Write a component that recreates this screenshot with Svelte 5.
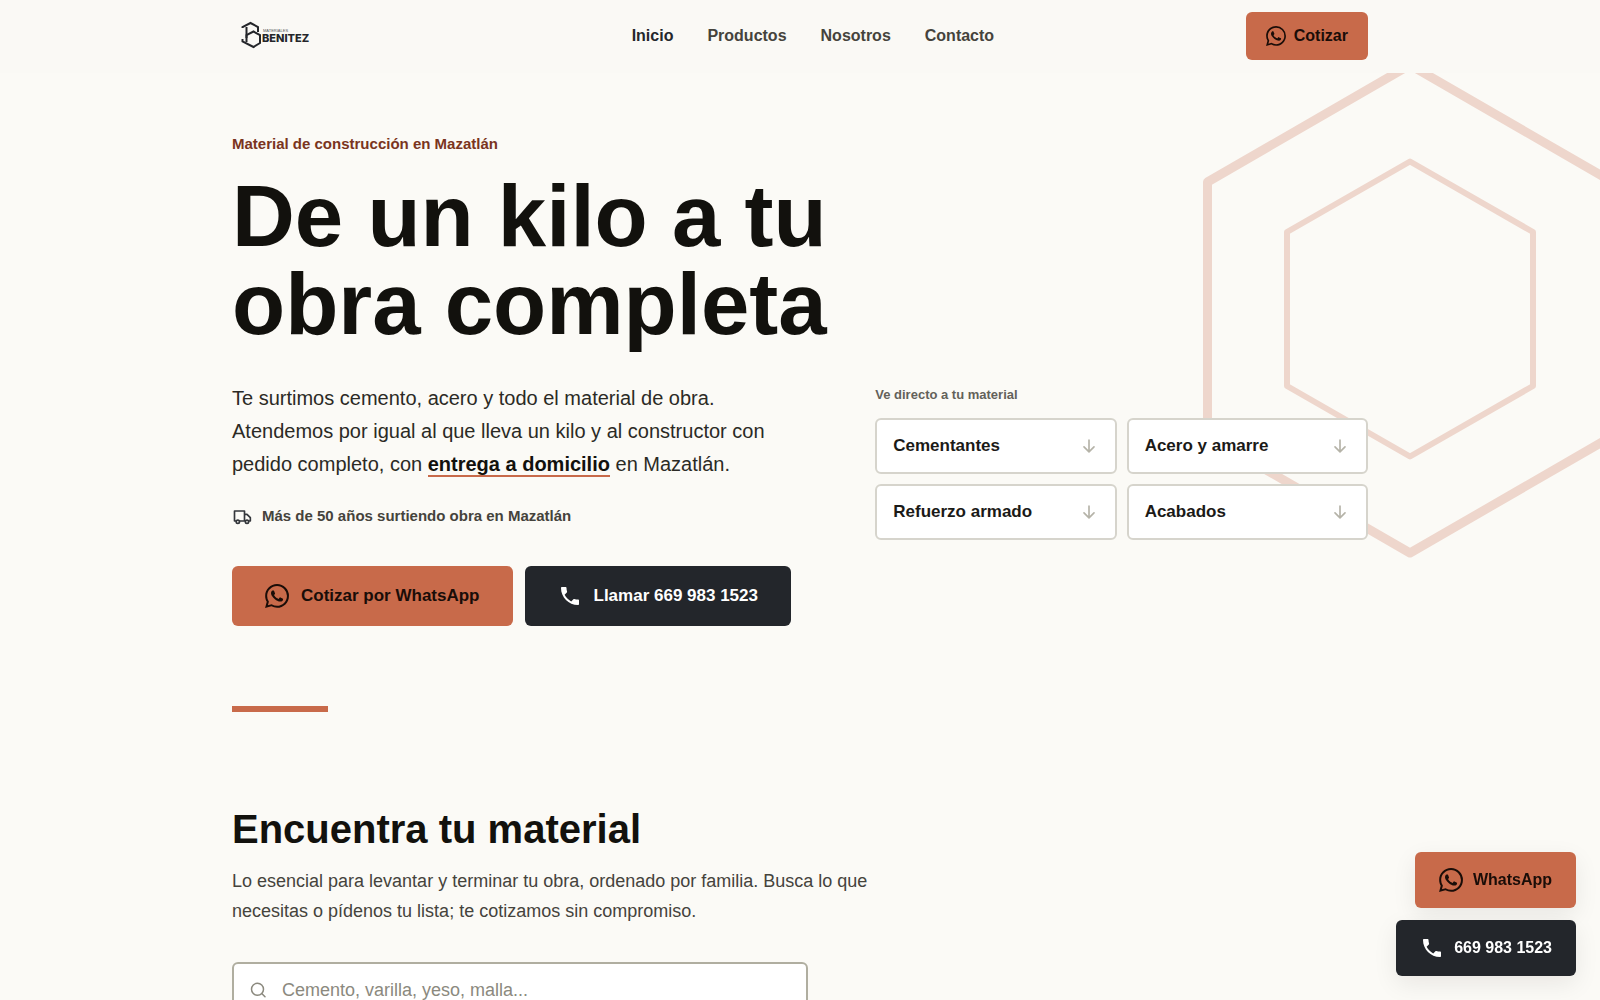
<script>
  const phone = '669 983 1523'

  const links = [
    { label: 'Inicio', href: '#inicio' },
    { label: 'Productos', href: '#productos' },
    { label: 'Nosotros', href: '#nosotros' },
    { label: 'Contacto', href: '#contacto' }
  ]

  const families = [
    { label: 'Cementantes', href: '#cementantes' },
    { label: 'Acero y amarre', href: '#acero' },
    { label: 'Refuerzo armado', href: '#refuerzo' },
    { label: 'Acabados', href: '#acabados' }
  ]

  let search = $state('')
</script>

{#snippet whatsapp(size)}
  <svg width={size} height={size} viewBox="0 0 24 24" fill="currentColor" aria-hidden="true">
    <path d="M17.472 14.382c-.297-.149-1.758-.867-2.03-.967-.273-.099-.471-.148-.67.15-.197.297-.767.966-.94 1.164-.173.199-.347.223-.644.075-.297-.15-1.255-.463-2.39-1.475-.883-.788-1.48-1.761-1.653-2.059-.173-.297-.018-.458.13-.606.134-.133.298-.347.446-.52.149-.174.198-.298.298-.497.099-.198.05-.371-.025-.52-.075-.149-.669-1.612-.916-2.207-.242-.579-.487-.5-.669-.51-.173-.008-.371-.01-.57-.01-.198 0-.52.074-.792.372-.272.297-1.04 1.016-1.04 2.479 0 1.462 1.065 2.875 1.213 3.074.149.198 2.096 3.2 5.077 4.487.709.306 1.262.489 1.694.625.712.227 1.36.195 1.871.118.571-.085 1.758-.719 2.006-1.413.248-.694.248-1.289.173-1.413-.074-.124-.272-.198-.57-.347m-5.421 7.403h-.004a9.87 9.87 0 0 1-5.031-1.378l-.361-.214-3.741.982.998-3.648-.235-.374a9.86 9.86 0 0 1-1.51-5.26c.001-5.45 4.436-9.884 9.888-9.884 2.64 0 5.122 1.03 6.988 2.898a9.825 9.825 0 0 1 2.893 6.994c-.003 5.45-4.437 9.884-9.885 9.884m8.413-18.297A11.815 11.815 0 0 0 12.05 0C5.495 0 .16 5.335.157 11.892c0 2.096.547 4.142 1.588 5.945L.057 24l6.305-1.654a11.882 11.882 0 0 0 5.683 1.448h.005c6.554 0 11.89-5.335 11.893-11.893a11.821 11.821 0 0 0-3.48-8.413Z" />
  </svg>
{/snippet}

{#snippet phoneIcon()}
  <svg width="24" height="24" viewBox="0 0 24 24" fill="currentColor" aria-hidden="true">
    <path d="M6.62 10.79c1.44 2.83 3.76 5.14 6.59 6.59l2.2-2.2c.27-.27.67-.36 1.02-.24 1.12.37 2.33.57 3.57.57.55 0 1 .45 1 1V20c0 .55-.45 1-1 1-9.39 0-17-7.61-17-17 0-.55.45-1 1-1h3.5c.55 0 1 .45 1 1 0 1.25.2 2.45.57 3.57.11.35.03.74-.25 1.02l-2.2 2.2z" />
  </svg>
{/snippet}

<header>
  <div class="container bar">
    <a class="logo" href="#inicio" aria-label="Materiales Benitez">
      <svg width="148" height="48" viewBox="-1 0 148 48">
        <g fill="none" stroke="#24262a" stroke-width="2">
          <path d="M9.500 16V15L17.500 11L25 15V20" />
          <path d="M13.500 15V30" />
          <path d="M13.500 26V23L20.500 19.500L27 23V31L20.500 35L9.500 29.500V27" />
        </g>
        <text class="logo-small" x="30" y="20">MATERIALES</text>
        <text class="logo-name" x="29" y="30">BENITEZ</text>
      </svg>
    </a>
    <nav>
      {#each links as link, i}
        <a class:active={i === 0} href={link.href}>{link.label}</a>
      {/each}
    </nav>
    <a class="btn primary small" href="#cotizar">{@render whatsapp(20)}Cotizar</a>
  </div>
</header>

<main>
  <section class="hero" id="inicio">
    <svg class="hexagons" width="440" height="520" viewBox="0 0 440 520" fill="none" stroke="#eed6cc" stroke-linejoin="round" aria-hidden="true">
      <path stroke-width="9" d="M220 16L422.500 133V387L220 504L17.500 387V133Z" />
      <path stroke-width="6" d="M220 112.500L343 183V337L220 407.500L97 337V183Z" />
    </svg>
    <div class="container">
      <p class="eyebrow">Material de construcción en Mazatlán</p>
      <h1>De un kilo a tu<br />obra completa</h1>
      <div class="columns">
        <div>
          <p class="lead">
            Te surtimos cemento, acero y todo el material de obra. Atendemos por igual al que lleva un kilo y al constructor con pedido completo, con <strong>entrega a domicilio</strong> en Mazatlán.
          </p>
          <p class="trust">
            <svg width="20" height="20" viewBox="0 0 24 24" fill="none" stroke="#33363b" stroke-width="2" stroke-linejoin="round" aria-hidden="true">
              <path d="M5 18H3V6h12v12H9M15 10h3l4 4v4h-2M16 18h-1" />
              <circle cx="7" cy="19" r="2" />
              <circle cx="18" cy="19" r="2" />
            </svg>
            Más de 50 años surtiendo obra en Mazatlán
          </p>
          <div class="actions">
            <a class="btn primary large" href="#cotizar">{@render whatsapp(24)}Cotizar por WhatsApp</a>
            <a class="btn dark large" href="tel:6699831523">{@render phoneIcon()}Llamar {phone}</a>
          </div>
        </div>
        <div>
          <p class="shortcut-title">Ve directo a tu material</p>
          <div class="shortcuts">
            {#each families as family}
              <a href={family.href}>
                {family.label}
                <svg width="20" height="20" viewBox="0 0 24 24" fill="none" stroke="#b5b3a8" stroke-width="2" stroke-linecap="round" stroke-linejoin="round" aria-hidden="true">
                  <path d="M12 5v14M6 13l6 6 6-6" />
                </svg>
              </a>
            {/each}
          </div>
        </div>
      </div>
      <div class="rule"></div>
    </div>
  </section>

  <section class="catalog container" id="productos">
    <h2>Encuentra tu material</h2>
    <p>Lo esencial para levantar y terminar tu obra, ordenado por familia. Busca lo que necesitas o pídenos tu lista; te cotizamos sin compromiso.</p>
    <div class="search">
      <svg width="18" height="18" viewBox="0 0 24 24" fill="none" stroke="#8b897e" stroke-width="2" stroke-linecap="round" aria-hidden="true">
        <circle cx="10" cy="11" r="8" />
        <path d="M16 17l4 4" />
      </svg>
      <input type="search" aria-label="Buscar material" placeholder="Cemento, varilla, yeso, malla..." bind:value={search} />
    </div>
  </section>
</main>

<aside class="floating">
  <a class="btn primary float" href="#cotizar">{@render whatsapp(24)}WhatsApp</a>
  <a class="btn dark float" href="tel:6699831523">{@render phoneIcon()}{phone}</a>
</aside>

<style>
  :global(body) {
    margin: 0;
    background: #fbfaf6;
    color: #12110d;
    font-family: 'Liberation Sans', Arial, sans-serif;
  }

  h1, h2, p {
    margin: 0;
  }

  a {
    color: inherit;
    text-decoration: none;
  }

  svg {
    flex: none;
  }

  .container {
    box-sizing: border-box;
    max-width: 1200px;
    margin: 0 auto;
    padding: 0 32px;
  }

  header {
    position: sticky;
    top: 0;
    z-index: 2;
    background: #faf9f5;
  }

  .bar {
    display: flex;
    align-items: center;
    justify-content: space-between;
    padding-top: 12px;
    padding-bottom: 13px;
  }

  .logo svg {
    display: block;
  }

  .logo-small {
    font-size: 4px;
    fill: #55565a;
  }

  .logo-name {
    font: 800 11px Inter, sans-serif;
    fill: #24262a;
  }

  nav {
    display: flex;
    gap: 34px;
    font-size: 16px;
    font-weight: 600;
    color: #45433c;
  }

  .active {
    color: #24272c;
  }

  .btn {
    display: flex;
    align-items: center;
    justify-content: center;
    border-radius: 6px;
    font-weight: 600;
    white-space: nowrap;
  }

  .primary {
    background: #c86a4a;
    color: #1a0d08;
  }

  .dark {
    background: #23262b;
    color: #fff;
  }

  .small {
    height: 48px;
    padding: 0 20px;
    gap: 8px;
    font-size: 16px;
  }

  .large {
    height: 60px;
    padding: 0 33px;
    gap: 12px;
    font-size: 17px;
  }

  .float {
    height: 56px;
    padding: 0 24px;
    gap: 10px;
    font-size: 16px;
    box-shadow: 0 8px 24px rgba(20, 18, 12, 0.08);
  }

  .hero {
    position: relative;
    overflow: hidden;
    padding-top: 59px;
  }

  .hero .container {
    position: relative;
  }

  .hexagons {
    position: absolute;
    top: -24px;
    right: -30px;
  }

  .eyebrow {
    font-size: 15px;
    line-height: 24px;
    font-weight: 600;
    color: #7a3420;
  }

  h1 {
    margin-top: 16px;
    font-size: 87px;
    line-height: 88px;
    font-weight: 800;
  }

  .columns {
    display: grid;
    grid-template-columns: minmax(0, 1.2fr) minmax(0, 1fr);
    gap: 52px;
    margin-top: 34px;
  }

  .lead {
    max-width: 544px;
    font-size: 20px;
    line-height: 33px;
    color: #2b2a25;
  }

  .lead strong {
    font-weight: 600;
    color: #12110d;
    border-bottom: 2px solid #c86a4a;
  }

  .trust {
    display: flex;
    align-items: center;
    gap: 10px;
    margin-top: 23px;
    font-size: 15px;
    line-height: 24px;
    font-weight: 600;
    color: #45433c;
  }

  .actions {
    display: flex;
    gap: 12px;
    margin-top: 38px;
  }

  .shortcut-title {
    margin-top: 3px;
    font-size: 13px;
    line-height: 20px;
    font-weight: 600;
    color: #63615a;
  }

  .shortcuts {
    display: grid;
    grid-template-columns: 1fr 1fr;
    gap: 10px;
    margin-top: 13px;
  }

  .shortcuts a {
    display: flex;
    align-items: center;
    justify-content: space-between;
    box-sizing: border-box;
    height: 56px;
    padding: 0 16px;
    border: 2px solid #d6d4cc;
    border-radius: 6px;
    background: #fff;
    font-size: 17px;
    font-weight: 600;
    color: #1b1a17;
  }

  .rule {
    width: 96px;
    height: 6px;
    margin-top: 80px;
    background: #c86a4a;
  }

  .catalog {
    padding-top: 93px;
    padding-bottom: 96px;
  }

  h2 {
    font-size: 40px;
    line-height: 48px;
    font-weight: 700;
  }

  .catalog p {
    max-width: 640px;
    margin-top: 13px;
    font-size: 18px;
    line-height: 30px;
    color: #45433c;
  }

  .search {
    display: flex;
    align-items: center;
    gap: 14px;
    box-sizing: border-box;
    max-width: 576px;
    height: 56px;
    margin-top: 36px;
    padding: 0 16px;
    border: 2px solid #b0aea0;
    border-radius: 6px;
    background: #fff;
  }

  .search input {
    flex: 1;
    min-width: 0;
    padding: 0;
    border: 0;
    outline: none;
    background: none;
    font: inherit;
    font-size: 18px;
    color: #12110d;
  }

  .search input::placeholder {
    color: #8b897e;
  }

  .floating {
    position: fixed;
    right: 24px;
    bottom: 24px;
    z-index: 3;
    display: flex;
    flex-direction: column;
    align-items: flex-end;
    gap: 12px;
  }
</style>
